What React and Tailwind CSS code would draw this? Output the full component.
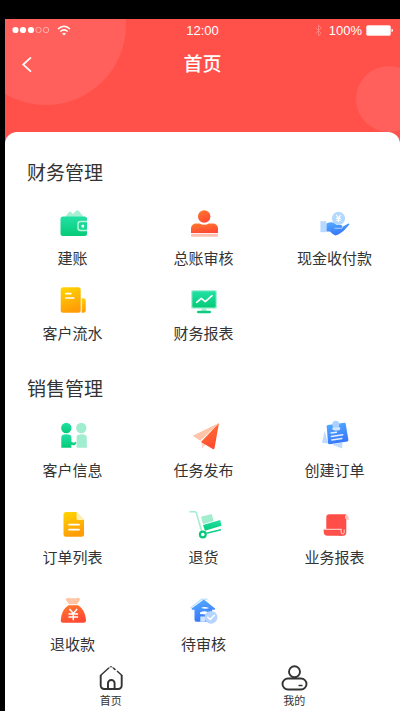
import { Bluetooth } from "lucide-react";

function Gradients() {
  return (
    <svg width="0" height="0" className="absolute" aria-hidden="true">
      <defs>
        <linearGradient id="green" x1="0" y1="0" x2="0" y2="1">
          <stop offset="0" stopColor="#22e0a5" />
          <stop offset="1" stopColor="#06cb78" />
        </linearGradient>
        <linearGradient id="orange" x1="0" y1="0" x2="0.4" y2="1">
          <stop offset="0" stopColor="#ff7a2d" />
          <stop offset="1" stopColor="#ff4b33" />
        </linearGradient>
        <linearGradient id="blue" x1="0" y1="0" x2="0.3" y2="1">
          <stop offset="0" stopColor="#56adff" />
          <stop offset="1" stopColor="#3678fb" />
        </linearGradient>
        <linearGradient id="yellow" x1="0" y1="0" x2="0.3" y2="1">
          <stop offset="0" stopColor="#ffd600" />
          <stop offset="1" stopColor="#ff9d08" />
        </linearGradient>
      </defs>
    </svg>
  );
}

const icons = {
  wallet: (
    <>
      <path d="M8 9 12 4q1-1 2 0l2 2 3-3q1.500-1.500 3 0l4 5v3H8Z" fill="#a5f0d3" />
      <rect x="3.500" y="8.500" width="26.500" height="19.500" rx="2.500" fill="url(#green)" />
      <path d="M30 13.500h-6.500a2.500 2.500 0 0 0-2.500 2.500v4a2.500 2.500 0 0 0 2.500 2.500H30" fill="#19d796" stroke="#b9f5dd" strokeWidth="1.400" />
      <rect x="24.500" y="16.800" width="2.600" height="2.600" rx="0.600" fill="#fff" />
    </>
  ),
  person: (
    <>
      <rect x="3" y="25.800" width="27" height="3" rx="0.800" fill="#ffc0b4" />
      <circle cx="16.200" cy="8.500" r="6.200" fill="url(#orange)" />
      <path d="M3 25v-4.500a5 5 0 0 1 5-5h3.500q4.700 2.500 9.500 0H25a5 5 0 0 1 5 5V25Z" fill="url(#orange)" />
    </>
  ),
  cash: (
    <>
      <rect x="1.400" y="13.200" width="6" height="11" fill="#b8d9ff" />
      <path d="M7.500 15.500q5-2.500 8.500 0l2 1.500h4q1.700.3 1.300 2l6-3.500q1.200 0 .9 1.200L24.500 23q-5.500 4-8 4.500-3.500-1.500-5.500-4H7.500Z" fill="url(#blue)" />
      <path d="M15.500 20.300h7q1 0 1-1.300" fill="none" stroke="#c3dfff" strokeWidth="0.800" />
      <circle cx="19.500" cy="10.300" r="6.600" fill="#b4d9ff" />
      <path d="m17.300 7 2.200 2.800L21.700 7M19.500 9.800v4.200M17.200 10.400h4.600M17.200 12.200h4.600" fill="none" stroke="#fff" strokeWidth="1.100" />
    </>
  ),
  journal: (
    <>
      <path d="M24.700 15.200H26a2.700 2.700 0 0 1 2.700 2.700v9.500a2.300 2.300 0 0 1-2.300 2.300h-1.700Z" fill="url(#yellow)" />
      <rect x="3.700" y="4.300" width="20" height="25.400" rx="2.500" fill="url(#yellow)" />
      <path d="M8.800 10.700h5M8.800 15h8" stroke="#fff" strokeWidth="1.700" strokeLinecap="round" />
    </>
  ),
  monitor: (
    <>
      <path d="M13.500 25h5v3h-5Z" fill="#a5f0d3" />
      <rect x="3" y="7" width="26" height="18.700" rx="1.500" fill="#a9f0d5" />
      <rect x="4.300" y="8.300" width="23.400" height="16.100" rx="1" fill="url(#green)" />
      <path d="m8.700 19.300 4.600-4 4 3.400 6.700-6" fill="none" stroke="#fff" strokeWidth="1.600" strokeLinecap="round" strokeLinejoin="round" />
      <rect x="9" y="27.800" width="14" height="2.400" rx="1.200" fill="#0dcb80" />
    </>
  ),
  people: (
    <>
      <circle cx="24.300" cy="8" r="5.200" fill="#a1edd0" />
      <path d="M19.600 27.700V17.500q0-3.300 5-3.300t5.200 3.300v10.200Z" fill="#a1edd0" />
      <circle cx="9.300" cy="8" r="5.200" fill="url(#green)" />
      <path d="M4.300 27.700V17.500q0-3.300 5-3.300 5.100 0 5.100 3.300v4.200l2.300 1 2.300-.9.300 1.800-2.300 2-2.600-.9v3Z" fill="url(#green)" />
    </>
  ),
  plane: (
    <>
      <path d="M31 3 4.700 15.700l7.600 5Z" fill="#ffc3a7" />
      <path d="m13.500 21.500.5 7 3.700-4.500Z" fill="#ffd2c4" />
      <path d="M31 3 13 22l12.200 7.300q1 .3 1.300-1Z" fill="url(#orange)" />
    </>
  ),
  notes: (
    <>
      <path d="M5.700 10.700 3 22.800l6 .8ZM13 24.500l10 4 .5-6Z" fill="#bddbff" />
      <path d="m9 5 16.500-2.300q1 0 1.200 1l2.700 16.300q0 1.200-1 1.500L10.500 24.300q-1.300 0-1.500-1.200L7.700 6.300Q7.800 5.200 9 5Z" fill="url(#blue)" />
      <path d="m12 13 5.500-.8M12.300 16.500l11.500-1.800M12.800 20l10-1.500" stroke="#e4f0ff" strokeWidth="1.400" strokeLinecap="round" />
      <ellipse cx="17.300" cy="8.500" rx="4" ry="2" fill="#d0e6ff" />
      <circle cx="16.800" cy="4.300" r="3.500" fill="#acd3ff" />
    </>
  ),
  doc: (
    <>
      <path d="M9 5h10.500l7.500 8v14.200a2.500 2.500 0 0 1-2.500 2.500H9a2.500 2.500 0 0 1-2.500-2.500V7.500A2.500 2.500 0 0 1 9 5Z" fill="url(#yellow)" />
      <path d="M19.500 5v6.500q0 1.500 1.500 1.500h6Z" fill="#fff0b0" />
      <path d="M12 17.700h10M12 22.700h10" stroke="#fff" strokeWidth="1.700" strokeLinecap="round" />
    </>
  ),
  trolley: (
    <>
      <path d="M2 4.700h5q1 0 1.300 1l5.200 18" fill="none" stroke="#a3edcf" strokeWidth="1.500" strokeLinecap="round" />
      <path d="m13 9.700 10.700-2.700 2 7L15 17Z" fill="#a3edcf" />
      <path d="m15 18 17.200-5 1.300 5.700L17 23.700Z" fill="url(#green)" />
      <path d="m18.500 26.300 14.500-3.600" stroke="#12cf88" strokeWidth="1.600" />
      <circle cx="14.800" cy="27.500" r="2.900" fill="#fff" stroke="#08c97b" strokeWidth="2.200" />
    </>
  ),
  scroll: (
    <>
      <path d="M26 7.300q4 .2 3.800 5.400h-2.600Z" fill="#ffc1bd" />
      <path d="M10.300 7.300H27q-.9 1-.8 3.500l1.100 1.900V25q0 3.800-3 3.800H20l-1-6.500H7.300v-12a3 3 0 0 1 3-3Z" fill="#ff4d48" />
      <path d="M4.700 22.500h17v2.700q.3 3.500 2.800 3.600h-16q-3.800 0-3.800-4Z" fill="#ff504a" />
      <path d="M4.700 22.300h17.500v3.200q.3 1.500 1.500 1.500t1.500-1.500v-3" fill="none" stroke="#ffc1bd" strokeWidth="1.200" />
    </>
  ),
  moneybag: (
    <>
      <path d="M12 10.300 9 6q-.3-2 2.300-2.200 1.700 0 3 .8 2-1 3.700 0 1.500-1 3.200-.8Q23.500 4 23 6l-3 4.300Z" fill="#ffc5a5" />
      <path d="M11.500 11.200h9.600q7.200 4.500 8 15-.1 2.500-2.300 2.500H6q-2.300 0-2.300-2.500.6-10.500 7.800-15Z" fill="url(#orange)" />
      <path d="m12.500 15 3.800 4.500 3.800-4.500M16.300 19.500v6.800M11.500 20h9.600M11.500 23h9.600" fill="none" stroke="#fff" strokeWidth="1.500" />
    </>
  ),
  house: (
    <>
      <path d="M2.500 14 13.500 5.300h6" fill="none" stroke="#c4e6ff" strokeWidth="1.500" />
      <path d="M14.800 6.200q1-.7 2 0L27 14.500q.7 1-.5 1.200H24v12H8.500q-2 0-2-2v-10H4.200q-1.300-.4-.2-1.400Z" fill="url(#blue)" />
      <path d="M13 14q3-2 8 0-2.500 1.600-8 0ZM12 18.500q4-2 8-.5l-2 2.500-6-.5Z" fill="#fff" />
      <path d="M12.300 22.500h5v5.200h-5Z" fill="#cfe4ff" />
      <circle cx="23" cy="23.300" r="6.400" fill="#b7d3ff" />
      <path d="m19.800 23.200 2.500 2.300 4-4.200" fill="none" stroke="#fff" strokeWidth="1.400" strokeLinecap="round" />
    </>
  ),
};

const finance = [
  { label: "建账", icon: "wallet" },
  { label: "总账审核", icon: "person" },
  { label: "现金收付款", icon: "cash" },
  { label: "客户流水", icon: "journal" },
  { label: "财务报表", icon: "monitor" },
];

const sales = [
  { label: "客户信息", icon: "people" },
  { label: "任务发布", icon: "plane" },
  { label: "创建订单", icon: "notes" },
  { label: "订单列表", icon: "doc" },
  { label: "退货", icon: "trolley" },
  { label: "业务报表", icon: "scroll" },
  { label: "退收款", icon: "moneybag" },
  { label: "待审核", icon: "house" },
];

function Tile({ label, icon }) {
  return (
    <button type="button" className="flex flex-col items-center gap-[9px]">
      <svg viewBox="0 0 32 32" className="size-8 overflow-visible" aria-hidden="true">
        {icons[icon]}
      </svg>
      <span className="text-[15px] leading-5 whitespace-nowrap">{label}</span>
    </button>
  );
}

function StatusBar() {
  return (
    <div className="grid h-[22px] grid-cols-3 items-center px-[7px] text-[13px] leading-none">
      <div className="flex items-center gap-[7px]">
        <svg viewBox="0 0 38 8" className="h-2 w-[38px]" aria-hidden="true">
          <g fill="#fff">
            <circle cx="3.500" cy="4" r="3.100" />
            <circle cx="11" cy="4" r="3.100" />
            <circle cx="19" cy="4" r="3.100" />
          </g>
          <g fill="none" stroke="#ffb5b2" strokeWidth="0.900">
            <circle cx="26.500" cy="4" r="2.700" />
            <circle cx="34" cy="4" r="2.700" />
          </g>
        </svg>
        <svg viewBox="0 0 14 11" className="h-[11px] w-3.5" fill="none" stroke="#fff" strokeWidth="1.500" aria-hidden="true">
          <path d="M1 4q6-5.500 12 0M3.300 6.500q3.700-3.300 7.400 0" />
          <path d="M5 8.500q2-1.600 4 0l-2 2Z" fill="#fff" stroke="none" />
        </svg>
      </div>
      <span className="text-center">12:00</span>
      <div className="flex items-center justify-end gap-1">
        <Bluetooth size={13} strokeWidth={1.5} className="text-[#ff8b87]" />
        <span>100%</span>
        <svg viewBox="0 0 27 11" className="h-[11px] w-[27px]" aria-hidden="true">
          <rect x="0.500" y="0.500" width="24" height="10" rx="1.500" fill="#fff" stroke="#ffc9c7" />
          <path d="M25.500 3.800q1.500.3 1.500 1.700t-1.500 1.700Z" fill="#fff" />
        </svg>
      </div>
    </div>
  );
}

function Header() {
  return (
    <header className="relative overflow-hidden bg-[#ff504a] pb-[59px] text-white">
      <div className="absolute -top-[74px] -left-[39px] size-40 rounded-full bg-[#ff605b]" />
      <div className="absolute top-[47px] -right-[22px] size-[66px] rounded-full bg-[#ff605b]" />
      <div className="relative">
        <StatusBar />
        <div className="grid h-12 grid-cols-3 items-center px-4">
          <button type="button" aria-label="返回" className="w-fit">
            <svg viewBox="0 0 12 16" className="h-4 w-3" fill="none" stroke="#fff" strokeWidth="1.700" aria-hidden="true">
              <path d="M10 .4 2.200 7.500l7.800 7.200" />
            </svg>
          </button>
          <h1 className="text-center text-[19px] leading-7 font-medium">首页</h1>
        </div>
      </div>
    </header>
  );
}

export default function App() {
  return (
    <div className="flex min-h-screen flex-col bg-black pt-[19px] pl-[5px] font-['Liberation_Sans','Noto_Sans_CJK_SC',sans-serif] text-[#333]">
      <Gradients />
      <div className="grow bg-white">
        <Header />
        <main className="relative -mt-4 rounded-t-xl bg-white pt-7 pl-0.5">
          <section>
            <h2 className="px-5 text-[19px] leading-7">财务管理</h2>
            <div className="mt-5 grid grid-cols-3 gap-y-3.5">
              {finance.map((item) => (
                <Tile key={item.label} {...item} />
              ))}
            </div>
          </section>
          <section className="mt-8">
            <h2 className="px-5 text-[19px] leading-7">销售管理</h2>
            <div className="mt-4 grid grid-cols-3 gap-y-[26px]">
              {sales.map((item) => (
                <Tile key={item.label} {...item} />
              ))}
            </div>
          </section>
        </main>
        <nav className="mt-2.5 grid grid-cols-2 px-3.5">
          <a href="#home" className="flex flex-col items-center">
            <svg viewBox="0 0 28 28" className="size-7" fill="none" stroke="#333" strokeWidth="1.900" aria-hidden="true">
              <path d="m3.500 10.500 8.500-7.800M16 2.700l2.500 2.200M20 6l5 4.500" strokeWidth="1.400" />
              <path d="M3.700 10v10.500a3.500 3.500 0 0 0 3.500 3.500h14a3.500 3.500 0 0 0 3.500-3.500V10" />
              <path d="M12.500 2.300 14 1.500l1.500.8" strokeWidth="1" />
              <path d="M11 24v-5.700a3.300 3.300 0 0 1 6.600 0V24" />
            </svg>
            <span className="text-[11px] leading-4">首页</span>
          </a>
          <a href="#mine" className="flex flex-col items-center">
            <svg viewBox="0 0 28 28" className="size-7" fill="none" stroke="#333" strokeWidth="1.900" aria-hidden="true">
              <circle cx="14.500" cy="6.800" r="5.500" />
              <rect x="2.500" y="13.500" width="24" height="11" rx="5.500" />
              <path d="M18.500 20.500h4" strokeWidth="1.500" />
            </svg>
            <span className="text-[11px] leading-4">我的</span>
          </a>
        </nav>
      </div>
    </div>
  );
}
